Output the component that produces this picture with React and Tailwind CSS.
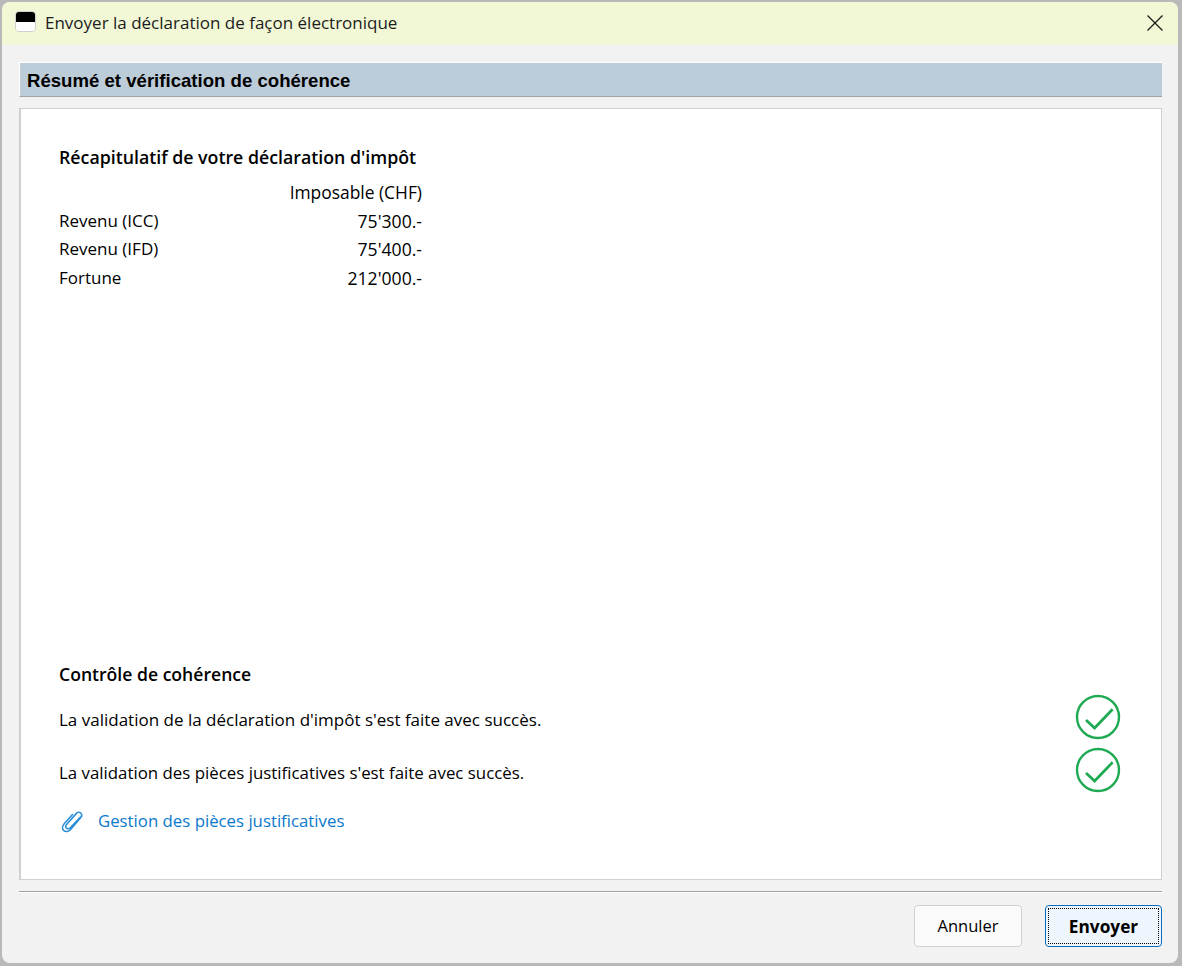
const uiFont = { fontFamily: '"Open Sans", "Noto Sans", sans-serif' };

function CheckCircle() {
    return (
        <svg width="46" height="46" viewBox="0 0 46 46" fill="none" stroke="#1fa952" strokeWidth="2.4">
            <circle cx="23" cy="23" r="21" />
            <path d="M11 26 L19.6 34 L37.6 15.3" strokeWidth="2.7" />
        </svg>
    );
}

function Clip() {
    return (
        <svg width="22" height="24" viewBox="0 0 22 24" fill="none" stroke="#2a8fd8" strokeWidth="1.6" strokeLinecap="round">
            <path d="M19.5 8 L9.5 18.5 C8 20 6.3 20 5.4 19 C4.5 18 4.6 16.5 6 15 L15.2 4.6 C16.4 3.2 18.2 2.8 19.6 4 C21 5.3 20.9 7.3 19.6 8.7 L9.6 20.4 C7.6 22.7 4.4 23.2 2.7 21.5 C1 19.8 1.3 16.8 3.2 14.7 L11.5 5.5" />
        </svg>
    );
}

const rows = [
    ["Revenu (ICC)", "75'300.-"],
    ["Revenu (IFD)", "75'400.-"],
    ["Fortune", "212'000.-"],
];

export default function App() {
    return (
        <div className="w-[1182px] h-[966px] bg-[#b9b9b9] pt-[2px] pl-[2px] pr-[4px] pb-[3px] text-black" style={uiFont}>
            <div className="h-full flex flex-col bg-[#f2f2f2] rounded-[8px] overflow-hidden">
                <div className="h-[43px] shrink-0 bg-[#f2f8d6] flex items-center pl-[13px] pr-[15px] pb-[2px]">
                    <div className="w-[21px] h-[21px] mb-[2px] rounded-[4px] overflow-hidden border border-[#cfcfcf] flex flex-col">
                        <div className="h-1/2 bg-black" />
                        <div className="h-1/2 bg-white" />
                    </div>
                    <span className="ml-[9px] text-[17px] text-[#1c1c1c]">Envoyer la déclaration de façon électronique</span>
                    <svg className="ml-auto" width="16" height="16" viewBox="0 0 16 16" stroke="#1a1a1a" strokeWidth="1.3">
                        <path d="M0.5 0.5 L15.5 15.5 M15.5 0.5 L0.5 15.5" />
                    </svg>
                </div>

                <div className="flex-1 flex flex-col pl-[17px] pr-[16px] pt-[17px]">
                    <div className="h-[35px] shrink-0 border-t border-l border-t-white border-l-white border-b border-b-[#a3a3a3] bg-[#bdccd9] flex items-center pl-[7px] pt-[2px] font-bold text-[18.6px]" style={{ fontFamily: '"Liberation Sans", sans-serif' }}>
                        Résumé et vérification de cohérence
                    </div>

                    <div className="mt-[11px] h-[772px] shrink-0 bg-white border border-[#d0d0d0] border-l-2 flex flex-col justify-between pl-[38px] pr-[40px] pt-[36px] pb-[46px] text-[17px]">
                        <div>
                            <div className="font-semibold leading-[24px] text-[17.75px]">Récapitulatif de votre déclaration d'impôt</div>
                            <div className="w-[363px] mt-[9px] leading-[28.5px]">
                                <div className="text-right text-[17.4px]">Imposable (CHF)</div>
                                {rows.map(([label, value]) => (
                                    <div key={label} className="flex justify-between">
                                        <span>{label}</span>
                                        <span className="text-[17.6px]">{value}</span>
                                    </div>
                                ))}
                            </div>
                        </div>

                        <div>
                            <div className="font-semibold leading-[24px] text-[17.6px]">Contrôle de cohérence</div>
                            <div className="mt-[8px] flex items-center justify-between h-[46px]">
                                <span className="mt-[6px]">La validation de la déclaration d'impôt s'est faite avec succès.</span>
                                <CheckCircle />
                            </div>
                            <div className="mt-[7px] flex items-center justify-between h-[46px]">
                                <span className="mt-[6px] text-[16.85px]">La validation des pièces justificatives s'est faite avec succès.</span>
                                <CheckCircle />
                            </div>
                            <div className="mt-[16px] flex items-center text-[#0a78cc]">
                                <div className="ml-[2px]"><Clip /></div>
                                <span className="ml-[15px] leading-[24px] text-[16.8px]">Gestion des pièces justificatives</span>
                            </div>
                        </div>
                    </div>

                    <div className="mt-[11px] border-t border-t-[#a3a3a3] border-b border-b-white" />

                    <div className="mt-[12px] flex justify-end">
                        <button className="w-[108px] h-[42px] pt-[1px] bg-[#fbfbfb] border border-[#d0d0d0] rounded-[4px] text-[16.5px]">Annuler</button>
                        <button className="ml-[23px] w-[117px] h-[42px] bg-[#eef5fc] border border-[#0a6cc0] rounded-[4px] p-[2px] text-[17.25px]">
                            <span className="h-full flex items-center justify-center pt-[2px] border border-dotted border-black font-bold">Envoyer</span>
                        </button>
                    </div>
                </div>
            </div>
        </div>
    );
}
